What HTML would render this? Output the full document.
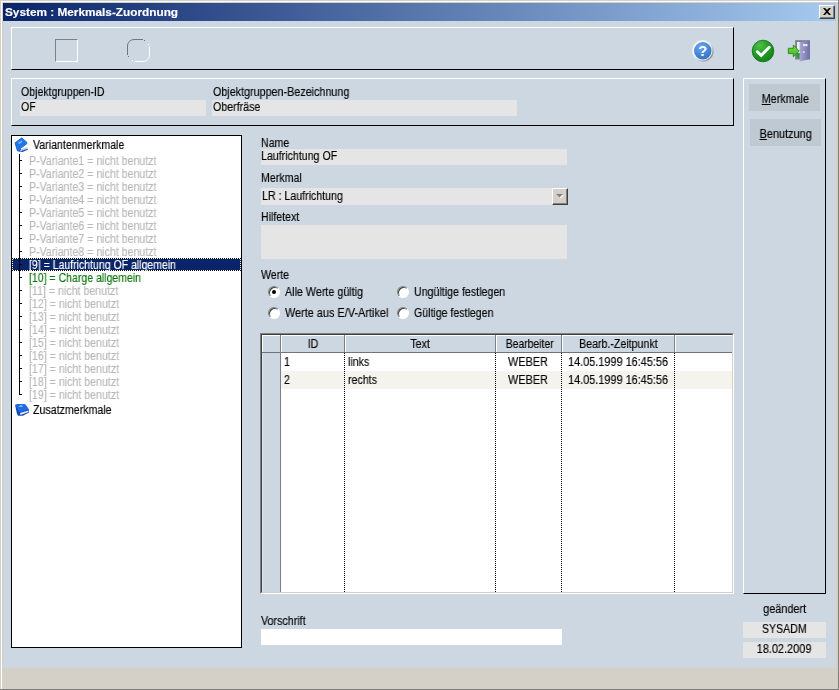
<!DOCTYPE html>
<html lang="de"><head><meta charset="utf-8"><title>System : Merkmals-Zuordnung</title>
<style>
html,body{margin:0;padding:0}
body{width:839px;height:690px;overflow:hidden;position:relative;background:#d4d0c8;font-family:"Liberation Sans",sans-serif;font-size:12px;line-height:14px;color:#000}
div,span,svg{position:absolute;box-sizing:border-box}
.t{white-space:nowrap;display:block;height:14px;transform-origin:0 0;will-change:transform;-webkit-text-stroke:0.15px currentColor}
.tc{transform-origin:50% 0}
u{text-decoration:underline;text-underline-offset:1px}
.panel{border:1px solid;border-color:#fff #000 #000 #fff}
.fld{background:#e5e5e6}
.btn{background:#bfc9d2}
.radio{width:12px;height:12px;border-radius:50%;background:#fff;border:1px solid;border-color:#808080 #fff #fff #808080;box-shadow:inset 1px 1px 0 #404040}
.vdot{width:1px;background:repeating-linear-gradient(to bottom,#000 0 1px,transparent 1px 2px)}
</style></head><body>

<div style="left:0px;top:0px;width:839px;height:690px;background:#d4d0c8"></div>
<div style="left:1px;top:1px;width:837px;height:1px;background:#fff"></div>
<div style="left:1px;top:1px;width:1px;height:688px;background:#fff"></div>
<div style="left:838px;top:0px;width:1px;height:690px;background:#807e7a"></div>
<div style="left:0px;top:689px;width:839px;height:1px;background:#807e7a"></div>
<div style="left:3px;top:21px;width:833px;height:647px;background:#ccd7e1"></div>
<div style="left:3px;top:3px;width:833px;height:18px;background:linear-gradient(to right,#0a246a,#a6caf0)"></div>
<span class="t" style="left:5px;top:5px;color:#fff;font-weight:bold;font-size:11.5px;transform:scaleX(1.026)">System : Merkmals-Zuordnung</span>
<div style="left:819px;top:5px;width:16px;height:14px;background:#d4d0c8;border:1px solid;border-color:#fff #404040 #404040 #fff;box-shadow:inset -1px -1px 0 #808080"></div>
<svg style="left:823px;top:8px" width="8" height="7" viewBox="0 0 8 7"><path d="M0 0h2l2 2 2-2h2L5 3.5 8 7H6L4 5 2 7H0l3-3.5z" fill="#000"/></svg>
<div class="panel" style="left:11px;top:27px;width:723px;height:43px;"></div>
<div style="left:55px;top:39px;width:23px;height:23px;border:1px solid;border-color:#808080 #fff #fff #808080"></div>
<svg style="left:127px;top:39px" width="24" height="24" viewBox="0 0 24 24" fill="none" stroke-width="1">
<path d="M0.5 16 V7 A6.5 6.5 0 0 1 7 0.5 H16" stroke="#70757c"/>
<path d="M22.5 7.5 V16 A6.5 6.5 0 0 1 16 22.5 H7.5" stroke="#fff"/>
<rect x="17" y="1" width="1" height="1" fill="#70757c" stroke="none"/><rect x="1" y="17" width="1" height="1" fill="#70757c" stroke="none"/>
<rect x="21" y="5" width="1" height="1" fill="#fff" stroke="none"/><rect x="5" y="21" width="1" height="1" fill="#fff" stroke="none"/>
</svg>
<svg style="left:690px;top:38px;will-change:transform" width="26" height="26" viewBox="0 0 26 26">
<defs><radialGradient id="hg" cx="0.4" cy="0.3" r="0.8"><stop offset="0" stop-color="#6aa8ea"/><stop offset="1" stop-color="#2b6cc4"/></radialGradient>
<linearGradient id="hr" x1="0" y1="0" x2="1" y2="1"><stop offset="0" stop-color="#ffffff"/><stop offset="0.5" stop-color="#e2e6ec"/><stop offset="1" stop-color="#6e7076"/></linearGradient></defs>
<circle cx="12.9" cy="12.9" r="10.8" fill="url(#hr)"/>
<circle cx="12.7" cy="12.7" r="9.6" fill="#eef2f8"/>
<circle cx="12.8" cy="12.8" r="8.7" fill="url(#hg)"/>
<text x="12.8" y="18.2" text-anchor="middle" font-family="Liberation Sans, sans-serif" font-weight="bold" font-size="15" fill="#fff">?</text>
</svg>
<svg style="left:750px;top:38px" width="26" height="26" viewBox="0 0 26 26">
<defs><radialGradient id="cg" cx="0.35" cy="0.25" r="0.9"><stop offset="0" stop-color="#4fc04a"/><stop offset="0.5" stop-color="#1f9a22"/><stop offset="1" stop-color="#0f7a14"/></radialGradient></defs>
<circle cx="13" cy="13" r="10.8" fill="url(#cg)" stroke="#0e7214" stroke-width="0.8"/>
<path d="M7.3 13.8 L11.2 17.4 L19.2 9.3" fill="none" stroke="#fff" stroke-width="2.9" stroke-linecap="round" stroke-linejoin="miter"/>
</svg>
<svg style="left:786px;top:38px" width="26" height="26" viewBox="0 0 26 26">
<defs><linearGradient id="dg" x1="0" x2="1"><stop offset="0" stop-color="#a9a9d6"/><stop offset="1" stop-color="#6e6ea6"/></linearGradient>
<linearGradient id="ag" x1="0" y1="0" x2="0" y2="1"><stop offset="0" stop-color="#7be04a"/><stop offset="1" stop-color="#3fb51f"/></linearGradient></defs>
<rect x="9.2" y="2.2" width="14.6" height="19.3" fill="#7c7c8c"/>
<rect x="11" y="4" width="4" height="16" fill="#e8f4ff"/>
<rect x="11" y="15" width="3" height="5" fill="#2f9a2f"/>
<path d="M13.6 4.2 L23.8 2.6 V21 L13.6 23.6 Z" fill="url(#dg)"/>
<rect x="17" y="6" width="4.5" height="2.2" fill="#e6e6fa"/>
<rect x="16.8" y="13.2" width="1.8" height="1.8" fill="#d8d8f0"/>
<path d="M2.3 10.3 H7.3 V7 L13.2 13 L7.3 18.8 V15.6 H2.3 Z" fill="url(#ag)" stroke="#1f8a10" stroke-width="0.9" stroke-linejoin="round"/>
</svg>
<div class="panel" style="left:11px;top:78px;width:723px;height:48px;"></div>
<div class="fld" style="left:20px;top:100px;width:186px;height:16px;"></div>
<div class="fld" style="left:212px;top:100px;width:305px;height:16px;"></div>
<div style="left:11px;top:135px;width:231px;height:513px;background:#fff;border:1px solid #000"></div>
<div style="left:12px;top:259px;width:229px;height:11px;background:#0a246a"></div>
<div style="left:12px;top:258px;width:229px;height:1px;background:repeating-linear-gradient(to right,#000 0 1px,#fff 1px 2px)"></div>
<div style="left:12px;top:270px;width:229px;height:1px;background:repeating-linear-gradient(to right,#000 0 1px,#fff 1px 2px)"></div>
<div style="left:12px;top:259px;width:1px;height:11px;background:repeating-linear-gradient(to bottom,#fff 0 1px,#0a246a 1px 2px)"></div>
<div style="left:240px;top:259px;width:1px;height:11px;background:repeating-linear-gradient(to bottom,#fff 0 1px,#0a246a 1px 2px)"></div>
<div style="left:19px;top:154px;width:1px;height:241px;background:#000"></div>
<div style="left:19px;top:160px;width:3px;height:1px;background:#000"></div>
<div style="left:19px;top:173px;width:3px;height:1px;background:#000"></div>
<div style="left:19px;top:186px;width:3px;height:1px;background:#000"></div>
<div style="left:19px;top:199px;width:3px;height:1px;background:#000"></div>
<div style="left:19px;top:212px;width:3px;height:1px;background:#000"></div>
<div style="left:19px;top:225px;width:3px;height:1px;background:#000"></div>
<div style="left:19px;top:238px;width:3px;height:1px;background:#000"></div>
<div style="left:19px;top:251px;width:3px;height:1px;background:#000"></div>
<div style="left:19px;top:264px;width:3px;height:1px;background:#000"></div>
<div style="left:19px;top:277px;width:3px;height:1px;background:#000"></div>
<div style="left:19px;top:290px;width:3px;height:1px;background:#000"></div>
<div style="left:19px;top:303px;width:3px;height:1px;background:#000"></div>
<div style="left:19px;top:316px;width:3px;height:1px;background:#000"></div>
<div style="left:19px;top:329px;width:3px;height:1px;background:#000"></div>
<div style="left:19px;top:342px;width:3px;height:1px;background:#000"></div>
<div style="left:19px;top:355px;width:3px;height:1px;background:#000"></div>
<div style="left:19px;top:368px;width:3px;height:1px;background:#000"></div>
<div style="left:19px;top:381px;width:3px;height:1px;background:#000"></div>
<div style="left:19px;top:394px;width:3px;height:1px;background:#000"></div>
<svg style="left:14px;top:137px" width="15" height="16" viewBox="0 0 15 16">
<path d="M7.7 0.9 L12.7 5.2 L12.9 6.6 L6.8 11.2 L5.8 14.3 L3.4 13.8 L1.1 5.9 Z" fill="#1f79ea" stroke="#1258c8" stroke-width="0.9" stroke-linejoin="round"/>
<path d="M6.8 11.4 L13.3 8.9 L13.7 11.8 L7.6 13.9 Z" fill="#f1f2f6"/>
<path d="M7.1 12.6 L13.5 10.2 L13.6 11 L7.3 13.4 Z" fill="#b4b8c6"/>
<path d="M5.2 14.2 L7.6 13.8 L13.7 11.7 L13.9 12.7 L8.4 15 Z" fill="#0f49b4"/>
<path d="M4.6 6.6 L7.8 4.2" stroke="#9fd0ff" stroke-width="1.2" fill="none"/>
</svg>
<svg style="left:14px;top:402px" width="16" height="15" viewBox="0 0 16 15">
<path d="M1.1 3.1 L4.1 1.9 L11.3 2.4 L14.9 7.4 L14.9 10.6 L8.8 13.8 L4.1 13.8 L3 11.7 Z" fill="#0d45b6"/>
<path d="M1.1 3.1 L4.1 1.9 L11.3 2.4 L14.9 7.4 L5.4 10.4 Z" fill="#1b6fe6"/>
<path d="M5.9 11 L14.4 8.5 L14.4 10 L6.5 12.9 Z" fill="#f3e9e2"/>
<path d="M4.4 4.7 L7.2 3.1 L9.2 4.7 Z" fill="#a8d2ff"/>
</svg>
<div class="fld" style="left:261px;top:149px;width:306px;height:16px;"></div>
<div class="fld" style="left:261px;top:188px;width:307px;height:17px;"></div>
<div style="left:552px;top:188px;width:16px;height:17px;background:#d4d0c8;border:1px solid;border-color:#fff #404040 #404040 #fff;box-shadow:inset -1px -1px 0 #808080"></div>
<svg style="left:555px;top:193px" width="10" height="7" viewBox="0 0 10 7"><path d="M2 2h7l-3.5 3.5z" fill="#fff"/><path d="M1 1h7l-3.5 3.5z" fill="#808080"/></svg>
<div class="fld" style="left:261px;top:225px;width:306px;height:34px;"></div>
<div class="radio" style="left:268px;top:286px;width:12px;height:12px;"><div style="left:3px;top:3px;width:4px;height:4px;background:#000;border-radius:50%"></div></div>
<div class="radio" style="left:268px;top:307px;width:12px;height:12px;"></div>
<div class="radio" style="left:397px;top:286px;width:12px;height:12px;"></div>
<div class="radio" style="left:397px;top:307px;width:12px;height:12px;"></div>
<div style="left:260px;top:333px;width:474px;height:261px;background:#fff;border:1px solid;border-color:#808080 #fff #fff #808080"></div>
<div style="left:261px;top:334px;width:472px;height:259px;border:1px solid;border-color:#404040 #d4d0c8 #d4d0c8 #404040"></div>
<div style="left:262px;top:335px;width:470px;height:17px;background:#ccd7e1"></div>
<div style="left:262px;top:352px;width:470px;height:1px;background:#6e747c"></div>
<div style="left:262px;top:353px;width:18px;height:239px;background:#ccd7e1"></div>
<div style="left:262px;top:335px;width:470px;height:1px;background:#fff"></div>
<div style="left:262px;top:335px;width:1px;height:17px;background:#fff"></div>
<div style="left:262px;top:353px;width:1px;height:239px;background:#dde4ea"></div>
<div style="left:280px;top:335px;width:1px;height:257px;background:#7a8088"></div>
<div style="left:281px;top:371px;width:451px;height:18px;background:#f5f3ed"></div>
<div style="left:344px;top:335px;width:1px;height:17px;background:#7a8088"></div>
<div style="left:345px;top:335px;width:1px;height:17px;background:#fff"></div>
<div class="vdot" style="left:344px;top:353px;width:1px;height:239px;"></div>
<div style="left:495px;top:335px;width:1px;height:17px;background:#7a8088"></div>
<div style="left:496px;top:335px;width:1px;height:17px;background:#fff"></div>
<div class="vdot" style="left:495px;top:353px;width:1px;height:239px;"></div>
<div style="left:561px;top:335px;width:1px;height:17px;background:#7a8088"></div>
<div style="left:562px;top:335px;width:1px;height:17px;background:#fff"></div>
<div class="vdot" style="left:561px;top:353px;width:1px;height:239px;"></div>
<div style="left:674px;top:335px;width:1px;height:17px;background:#7a8088"></div>
<div style="left:675px;top:335px;width:1px;height:17px;background:#fff"></div>
<div class="vdot" style="left:674px;top:353px;width:1px;height:239px;"></div>
<div style="left:281px;top:335px;width:1px;height:17px;background:#fff"></div>
<div style="left:261px;top:629px;width:301px;height:16px;background:#fff"></div>
<div class="panel" style="left:743px;top:78px;width:83px;height:516px;"></div>
<div class="btn" style="left:749px;top:84px;width:71px;height:27px;"></div>
<div class="btn" style="left:750px;top:119px;width:71px;height:27px;"></div>
<div class="fld" style="left:743px;top:622px;width:83px;height:16px;"></div>
<div class="fld" style="left:743px;top:642px;width:83px;height:16px;"></div>
<span class="t" style="left:20.5px;top:85px;color:#000;transform:scaleX(0.8816);">Objektgruppen-ID</span>
<span class="t" style="left:20.5px;top:100px;color:#000;transform:scaleX(0.8850);">OF</span>
<span class="t" style="left:213px;top:85px;color:#000;transform:scaleX(0.8961);">Objektgruppen-Bezeichnung</span>
<span class="t" style="left:213px;top:100px;color:#000;transform:scaleX(0.8864);">Oberfräse</span>
<span class="t" style="left:33px;top:138px;color:#000;transform:scaleX(0.8850);">Variantenmerkmale</span>
<span class="t" style="left:28.5px;top:154px;color:#b8b8b8;transform:scaleX(0.8842);">P-Variante1 = nicht benutzt</span>
<span class="t" style="left:28.5px;top:167px;color:#b8b8b8;transform:scaleX(0.8842);">P-Variante2 = nicht benutzt</span>
<span class="t" style="left:28.5px;top:180px;color:#b8b8b8;transform:scaleX(0.8842);">P-Variante3 = nicht benutzt</span>
<span class="t" style="left:28.5px;top:193px;color:#b8b8b8;transform:scaleX(0.8842);">P-Variante4 = nicht benutzt</span>
<span class="t" style="left:28.5px;top:206px;color:#b8b8b8;transform:scaleX(0.8842);">P-Variante5 = nicht benutzt</span>
<span class="t" style="left:28.5px;top:219px;color:#b8b8b8;transform:scaleX(0.8842);">P-Variante6 = nicht benutzt</span>
<span class="t" style="left:28.5px;top:232px;color:#b8b8b8;transform:scaleX(0.8842);">P-Variante7 = nicht benutzt</span>
<span class="t" style="left:28.5px;top:245px;color:#b8b8b8;transform:scaleX(0.8842);">P-Variante8 = nicht benutzt</span>
<span class="t" style="left:28.5px;top:258px;color:#fff;transform:scaleX(0.8762);">[9] = Laufrichtung OF allgemein</span>
<span class="t" style="left:28.5px;top:271px;color:#0f760f;transform:scaleX(0.8767);">[10] = Charge allgemein</span>
<span class="t" style="left:28.5px;top:284px;color:#b8b8b8;transform:scaleX(0.8850);">[11] = nicht benutzt</span>
<span class="t" style="left:28.5px;top:297px;color:#b8b8b8;transform:scaleX(0.8850);">[12] = nicht benutzt</span>
<span class="t" style="left:28.5px;top:310px;color:#b8b8b8;transform:scaleX(0.8850);">[13] = nicht benutzt</span>
<span class="t" style="left:28.5px;top:323px;color:#b8b8b8;transform:scaleX(0.8850);">[14] = nicht benutzt</span>
<span class="t" style="left:28.5px;top:336px;color:#b8b8b8;transform:scaleX(0.8850);">[15] = nicht benutzt</span>
<span class="t" style="left:28.5px;top:349px;color:#b8b8b8;transform:scaleX(0.8850);">[16] = nicht benutzt</span>
<span class="t" style="left:28.5px;top:362px;color:#b8b8b8;transform:scaleX(0.8850);">[17] = nicht benutzt</span>
<span class="t" style="left:28.5px;top:375px;color:#b8b8b8;transform:scaleX(0.8850);">[18] = nicht benutzt</span>
<span class="t" style="left:28.5px;top:388px;color:#b8b8b8;transform:scaleX(0.8850);">[19] = nicht benutzt</span>
<span class="t" style="left:33px;top:403px;color:#000;transform:scaleX(0.8850);">Zusatzmerkmale</span>
<span class="t" style="left:261px;top:136px;color:#000;transform:scaleX(0.8850);">Name</span>
<span class="t" style="left:261px;top:149px;color:#000;transform:scaleX(0.8850);">Laufrichtung OF</span>
<span class="t" style="left:261px;top:171px;color:#000;transform:scaleX(0.8850);">Merkmal</span>
<span class="t" style="left:262px;top:189px;color:#000;transform:scaleX(0.8850);">LR : Laufrichtung</span>
<span class="t" style="left:261px;top:210px;color:#000;transform:scaleX(0.8833);">Hilfetext</span>
<span class="t" style="left:261px;top:268px;color:#000;transform:scaleX(0.8850);">Werte</span>
<span class="t" style="left:285px;top:285px;color:#000;transform:scaleX(0.8949);">Alle Werte gültig</span>
<span class="t" style="left:285px;top:306px;color:#000;transform:scaleX(0.9075);">Werte aus E/V-Artikel</span>
<span class="t" style="left:413.5px;top:285px;color:#000;transform:scaleX(0.8876);">Ungültige festlegen</span>
<span class="t" style="left:413.5px;top:306px;color:#000;transform:scaleX(0.8816);">Gültige festlegen</span>
<span class="t tc" style="left:306.50px;top:337px;width:12.00px;color:#000;transform:scaleX(0.8850);">ID</span>
<span class="t tc" style="left:409.49px;top:337px;width:22.02px;color:#000;transform:scaleX(0.8850);">Text</span>
<span class="t tc" style="left:501.51px;top:337px;width:55.38px;color:#000;transform:scaleX(0.8668);">Bearbeiter</span>
<span class="t tc" style="left:574.14px;top:337px;width:88.72px;color:#000;transform:scaleX(0.8850);">Bearb.-Zeitpunkt</span>
<span class="t" style="left:284px;top:355px;color:#000;transform:scaleX(0.8850);">1</span>
<span class="t" style="left:347.5px;top:355px;color:#000;transform:scaleX(0.8850);">links</span>
<span class="t tc" style="left:505.79px;top:355px;width:44.02px;color:#000;transform:scaleX(0.9088);">WEBER</span>
<span class="t" style="left:567.5px;top:355px;color:#000;transform:scaleX(0.9082);">14.05.1999 16:45:56</span>
<span class="t" style="left:284px;top:373px;color:#000;transform:scaleX(0.8850);">2</span>
<span class="t" style="left:347.5px;top:373px;color:#000;transform:scaleX(0.8850);">rechts</span>
<span class="t tc" style="left:505.79px;top:373px;width:44.02px;color:#000;transform:scaleX(0.9088);">WEBER</span>
<span class="t" style="left:567.5px;top:373px;color:#000;transform:scaleX(0.9082);">14.05.1999 16:45:56</span>
<span class="t" style="left:261px;top:614px;color:#000;transform:scaleX(0.8917);">Vorschrift</span>
<span class="t tc" style="left:758.86px;top:92px;width:52.69px;color:#000;transform:scaleX(0.8977);"><u>M</u>erkmale</span>
<span class="t tc" style="left:756.90px;top:127px;width:57.41px;color:#000;transform:scaleX(0.9111);"><u>B</u>enutzung</span>
<span class="t tc" style="left:760.81px;top:602px;width:47.38px;color:#000;transform:scaleX(0.9077);">geändert</span>
<span class="t tc" style="left:759.36px;top:622px;width:50.69px;color:#000;transform:scaleX(0.8838);">SYSADM</span>
<span class="t tc" style="left:753.57px;top:642px;width:60.06px;color:#000;transform:scaleX(0.9107);">18.02.2009</span>
</body></html>
